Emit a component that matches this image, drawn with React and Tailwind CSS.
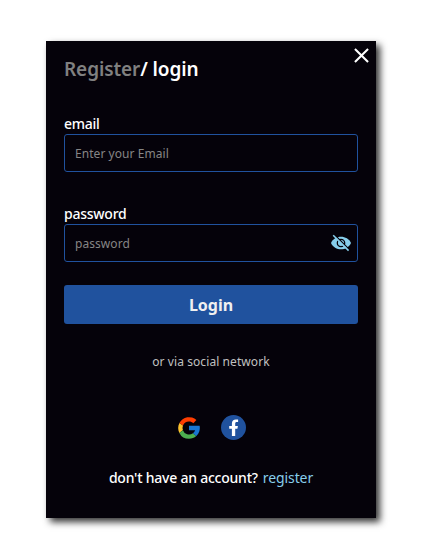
import { MdClose } from "react-icons/md";

const Field = ({ label, placeholder, labelClass, placeholderClass, children }) => (
  <label className="flex flex-col">
    <span className={`h-[20px] text-[14px] leading-[18px] font-medium text-white ${labelClass}`}>{label}</span>
    <span className="flex h-[38px] items-center rounded-[3px] border border-[#20529e] pl-[10px] pr-[6px]">
      <input placeholder={placeholder} className={`min-w-0 flex-1 bg-transparent pt-[2px] text-[12px] outline-none placeholder:text-[#858585] ${placeholderClass}`} />
      {children}
    </span>
  </label>
);

const EyeOff = () => (
  <svg viewBox="0 0 20 18" className="h-[18px] w-[20px] shrink-0">
    <path d="M0 9C3.600 .6 16.400 .6 20 9C16.400 17.400 3.600 17.400 0 9Z" fill="#87ceeb" />
    <circle cx="10" cy="9" r="3.700" fill="#87ceeb" stroke="#05020a" strokeWidth="1.300" />
    <path d="M3.500 .8L19 16.300" stroke="#05020a" strokeWidth="1.300" />
    <path d="M2.200 1.200L17.600 16.600" stroke="#87ceeb" strokeWidth="1.600" />
  </svg>
);

const Google = () => (
  <svg viewBox="0 0 48 48" className="h-[26px] w-[26px]">
    <path fill="#fbc02d" d="M6.300 14.700C4.800 17.500 4 20.700 4 24c0 3.200.8 6.300 2.200 9l6.600-5.100a12 12 0 0 1 .1-8.300z" />
    <path fill="#ff3d00" d="M6.300 14.700l6.600 4.800A12 12 0 0 1 24 12c3.100 0 5.800 1.200 8 3l5.700-5.600A20 20 0 0 0 6.300 14.700z" />
    <path fill="#4caf50" d="M24 44c5.200 0 9.900-2 13.400-5.200l-6.200-5.200A12 12 0 0 1 12.700 28l-6.500 5A20 20 0 0 0 24 44z" />
    <path fill="#1976d2" d="M43.600 20H24v8h11.300a12 12 0 0 1-4.100 5.600l6.200 5.200C37 39.200 44 34 44 24c0-1.300-.1-2.700-.4-4z" />
  </svg>
);

const Facebook = () => (
  <svg viewBox="0 0 25 25" className="h-[25px] w-[25px]">
    <circle cx="12.500" cy="12.500" r="12.500" fill="#20529e" />
    <path fill="#fff" d="M10.900 21v-7.200H8.200v-2.900h2.700V8.500c0-2.700 1.600-4.100 4-4.100l2.200.2v2.500h-1.300c-1.200 0-1.600.7-1.600 1.500v2.300h2.700l-.5 2.900h-2.200V21z" />
  </svg>
);

export default function App() {
  return (
    <main className="h-[559px] w-[421px] bg-white pl-[46px] pt-[41px] font-['Noto_Sans','Open_Sans',sans-serif]">
      <section className="flex h-[477px] w-[330px] flex-col bg-[#05020a] px-[18px] shadow-[4px_4px_7px_rgba(0,0,0,0.8)]">
        <header className="flex h-[74px] justify-between pt-[14px]">
          <h1 className="whitespace-nowrap text-[19px] font-semibold leading-[28px] tracking-[-0.1px] text-white">
            <span className="text-[#808080]">Register</span>/ login
          </h1>
          <button aria-label="Close" className="-mr-[16px] -mt-[12px] h-[25px] w-[25px] text-white">
            <MdClose className="h-[25px] w-[25px]" />
          </button>
        </header>
        <div className="-mt-px">
          <Field label="email" placeholder="Enter your Email" labelClass="pt-px tracking-[-0.3px]" placeholderClass="tracking-[0.06px]" />
        </div>
        <div className="h-[32px]" />
        <Field label="password" placeholder="password" labelClass="pt-px tracking-[-0.25px]" placeholderClass="tracking-[0.06px]">
          <EyeOff />
        </Field>
        <button className="mt-[23px] h-[39px] rounded-[3px] bg-[#20529e] text-[16px] font-bold text-[#f0f0f0]">Login</button>
        <p className="mt-[29px] text-center text-[12px] leading-[18px] tracking-[0.08px] text-[#c0c0c0]">or via social network</p>
        <div className="mt-[44px] flex h-[25px] items-center justify-center gap-[19px]">
          <Google />
          <Facebook />
        </div>
        <p className="mt-[29px] flex justify-center gap-[5px] whitespace-nowrap text-[14px] leading-[18px] text-white">
          <span className="font-medium tracking-[-0.23px]">don't have an account?</span>
          <a className="tracking-[-0.1px] text-[#87ceeb]">register</a>
        </p>
      </section>
    </main>
  );
}
